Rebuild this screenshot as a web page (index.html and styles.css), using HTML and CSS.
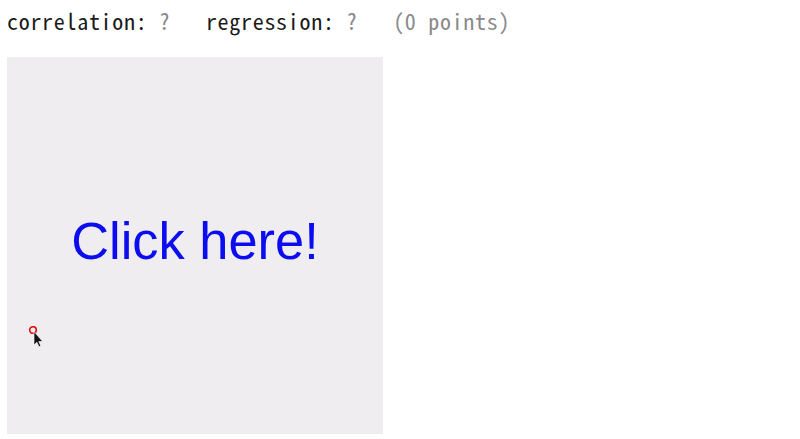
FILE: index.html
```html
<!DOCTYPE html>
<html>
<head>
<meta charset="utf-8">
<link rel="stylesheet" href="styles.css">
</head>
<body>
<div class="stats"><span class="lbl">correlation:</span> <span class="val">?</span>   <span class="lbl">regression:</span> <span class="val">?</span>   <span class="val">(0 points)</span></div>
<div class="canvas">
  <div class="cta">Click here!</div>
  <div class="pointer">
    <svg width="16" height="22" viewBox="0 0 16 22">
      <circle cx="4" cy="4" r="3.3" fill="none" stroke="#e01010" stroke-width="1.6"/>
      <path d="M5 5.5 L5 19 L7.9 16.2 L10 20.8 L11.8 20 L9.8 15.5 L13.6 15.5 Z" fill="#111" stroke="#fff" stroke-width="0.6"/>
    </svg>
  </div>
</div>
</body>
</html>
```

FILE: styles.css
```css
html, body {
  margin: 0;
  padding: 0;
  background: #fff;
}
body {
  padding: 0 7px;
}
.stats {
  font-family: "Noto Sans Mono CJK JP", "Noto Sans CJK JP", "DejaVu Sans Mono", monospace;
  font-size: 22px;
  letter-spacing: 0.7px;
  line-height: 30px;
  padding-top: 5px;
  white-space: pre;
  color: #1a1a1a;
}
.val {
  color: #8a8a8a;
}
.canvas {
  position: relative;
  margin-top: 22px;
  width: 376px;
  height: 377px;
  background: #efedf0;
  display: flex;
  align-items: center;
  justify-content: center;
}
.cta {
  font-family: "Liberation Sans", Arial, sans-serif;
  font-size: 52.4px;
  color: #0c0cf0;
  margin-top: -10px;
}
.pointer {
  position: absolute;
  left: 22px;
  top: 269px;
  line-height: 0;
}
```
